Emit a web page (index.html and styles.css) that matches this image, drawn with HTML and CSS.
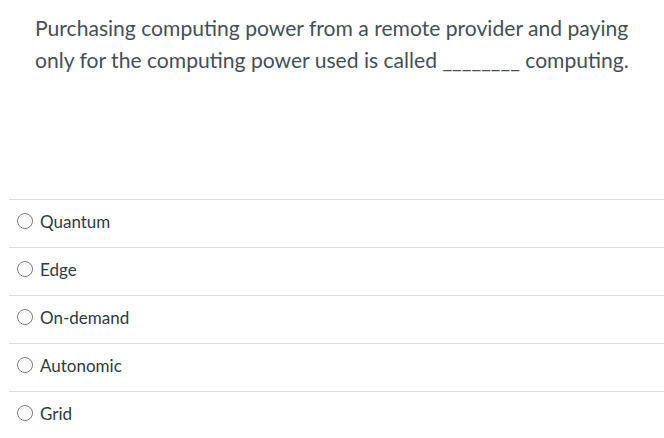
FILE: index.html
```html
<!DOCTYPE html>
<html>
<head>
<meta charset="utf-8">
<link rel="stylesheet" href="styles.css">
</head>
<body>
<div class="quiz">
  <div class="question">
    <p>Purchasing computing power from a remote provider and paying only for the computing power used is called <span class="blank">________</span> computing.</p>
  </div>
  <ul class="answers">
    <li class="answer"><span class="radio"></span><span class="label">Quantum</span></li>
    <li class="answer"><span class="radio"></span><span class="label">Edge</span></li>
    <li class="answer"><span class="radio"></span><span class="label">On-demand</span></li>
    <li class="answer"><span class="radio"></span><span class="label">Autonomic</span></li>
    <li class="answer"><span class="radio"></span><span class="label">Grid</span></li>
  </ul>
</div>
</body>
</html>
```

FILE: styles.css
```css
* { box-sizing: border-box; }
html, body {
  margin: 0;
  padding: 0;
  background: #ffffff;
  font-family: Lato, "Open Sans", sans-serif;
}
.quiz {
  width: 664px;
  height: 438px;
  overflow: hidden;
}
.question {
  height: 199px;
  padding: 12px 20px 0 35px;
}
.question p {
  margin: 0;
  font-size: 21.1px;
  line-height: 32px;
  color: #444f59;
}
.answers {
  list-style: none;
  margin: 0;
  padding: 0 0 0 9px;
}
.answer {
  display: flex;
  align-items: center;
  height: 48px;
  border-top: 1px solid #dcdcdc;
  padding-left: 8px;
  padding-bottom: 5px;
}
.radio {
  width: 16px;
  height: 16px;
  border: 1px solid #7a7e83;
  border-radius: 50%;
  flex: none;
}
.label {
  margin-left: 7px;
  font-size: 17px;
  color: #2d3b45;
}
```
